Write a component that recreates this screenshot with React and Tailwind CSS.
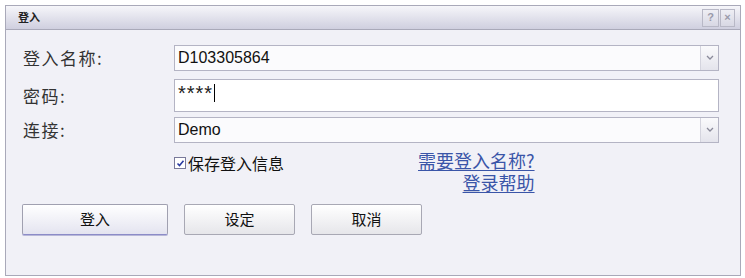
import React from "react";

function Chevron() {
  return (
    <svg width="8" height="6" viewBox="0 0 8 6">
      <path d="M1 1 L4 4 L7 1" fill="none" stroke="#8a8a9a" strokeWidth="1.3" />
    </svg>
  );
}

function Select({ value }) {
  return (
    <div className="flex h-[26px] flex-1 border border-[#b4b4c4] bg-[#fbfbfd]">
      <div className="flex flex-1 items-center pl-[3px] text-[16px] text-[#111] [font-family:'Liberation_Sans',Arial,sans-serif]">
        {value}
      </div>
      <div className="flex w-[18px] items-center justify-center border-l border-[#d4d4de] bg-gradient-to-b from-[#fafafc] to-[#e4e4ec]">
        <Chevron />
      </div>
    </div>
  );
}

export default function App() {
  const cjk = "[font-family:'Noto_Sans_CJK_SC',sans-serif]";
  return (
    <div className="h-[278px] w-[745px] bg-white pl-[5px] pt-[5px]">
      <div className="flex h-[271px] w-[736px] flex-col border border-[#a9a9b9] bg-[#f1f1f7]">
        {/* title bar */}
        <div className="flex h-[24px] items-center justify-between border-b border-[#a9a9b9] bg-gradient-to-b from-[#f6f6fa] to-[#cfcfdf] pl-[12px] pr-[5px]">
          <span className={`text-[11px] font-bold text-[#222] ${cjk}`}>登入</span>
          <div className="flex gap-[1px]">
            <div className="flex h-[18px] w-[17px] items-center justify-center border border-[#b8b8c6] bg-gradient-to-b from-[#eeeef4] to-[#d8d8e4] text-[11px] font-bold text-[#9a9aaa] [font-family:'Liberation_Sans',sans-serif]">
              ?
            </div>
            <div className="flex h-[18px] w-[15px] items-center justify-center border border-[#b8b8c6] bg-gradient-to-b from-[#eeeef4] to-[#d8d8e4] text-[11px] font-bold text-[#9a9aaa] [font-family:'Liberation_Sans',sans-serif]">
              ×
            </div>
          </div>
        </div>

        {/* form */}
        <div className={`flex flex-col pl-[17px] pr-[21px] pt-[15px] text-[#333] ${cjk}`}>
          <div className="flex items-center">
            <div className="w-[151px] text-[17px] tracking-[1.5px]">登入名称:</div>
            <Select value="D103305864" />
          </div>
          <div className="mt-[8px] flex items-center">
            <div className="w-[151px] text-[17px] tracking-[1.5px]">密码:</div>
            <div className="flex h-[33px] flex-1 items-start border border-[#b4b4c4] bg-white pl-[3px] pt-[3px]">
              <span className="text-[20px] leading-[20px] tracking-[1px] text-[#222] [font-family:'Liberation_Sans',Arial,sans-serif]">****</span>
              <span className="ml-[1px] mt-[1px] h-[18px] w-[1px] bg-black"></span>
            </div>
          </div>
          <div className="mt-[5px] flex items-center">
            <div className="w-[151px] text-[17px] tracking-[1.5px]">连接:</div>
            <Select value="Demo" />
          </div>

          <div className="flex">
            <div className="w-[151px]"></div>
            <div className="mt-[10px] flex items-center self-start">
              <div className="flex h-[12px] w-[12px] items-center justify-center border border-[#7a7a9a] bg-white">
                <svg width="9" height="9" viewBox="0 0 9 9">
                  <path d="M1.5 4.5 L3.5 6.5 L7.5 1.8" fill="none" stroke="#2a3aa0" strokeWidth="1.6" />
                </svg>
              </div>
              <span className="ml-[2px] text-[16px] leading-[20px] text-[#111]">保存登入信息</span>
            </div>
            <div className="ml-[134px] mt-[6px] flex flex-col items-end text-[18px] leading-[22px] text-[#3a55a8]">
              <span className="underline underline-offset-[2px]">需要登入名称?</span>
              <span className="underline underline-offset-[2px]">登录帮助</span>
            </div>
          </div>

          <div className="-ml-[1px] mt-[11px] flex gap-[16px] text-[15px] text-[#111]">
            <div className="flex h-[31px] w-[146px] items-center justify-center rounded-[2px] border border-[#a0a0b0] border-b-[#8c8cc8] bg-gradient-to-b from-white to-[#e4e4f0] shadow-[0_1px_0_#b8b8d8]">
              登入
            </div>
            <div className="flex h-[31px] w-[111px] items-center justify-center rounded-[2px] border border-[#a8a8b4] bg-gradient-to-b from-white to-[#e6e6ea]">
              设定
            </div>
            <div className="flex h-[31px] w-[111px] items-center justify-center rounded-[2px] border border-[#a8a8b4] bg-gradient-to-b from-white to-[#e6e6ea]">
              取消
            </div>
          </div>
        </div>
      </div>
    </div>
  );
}
